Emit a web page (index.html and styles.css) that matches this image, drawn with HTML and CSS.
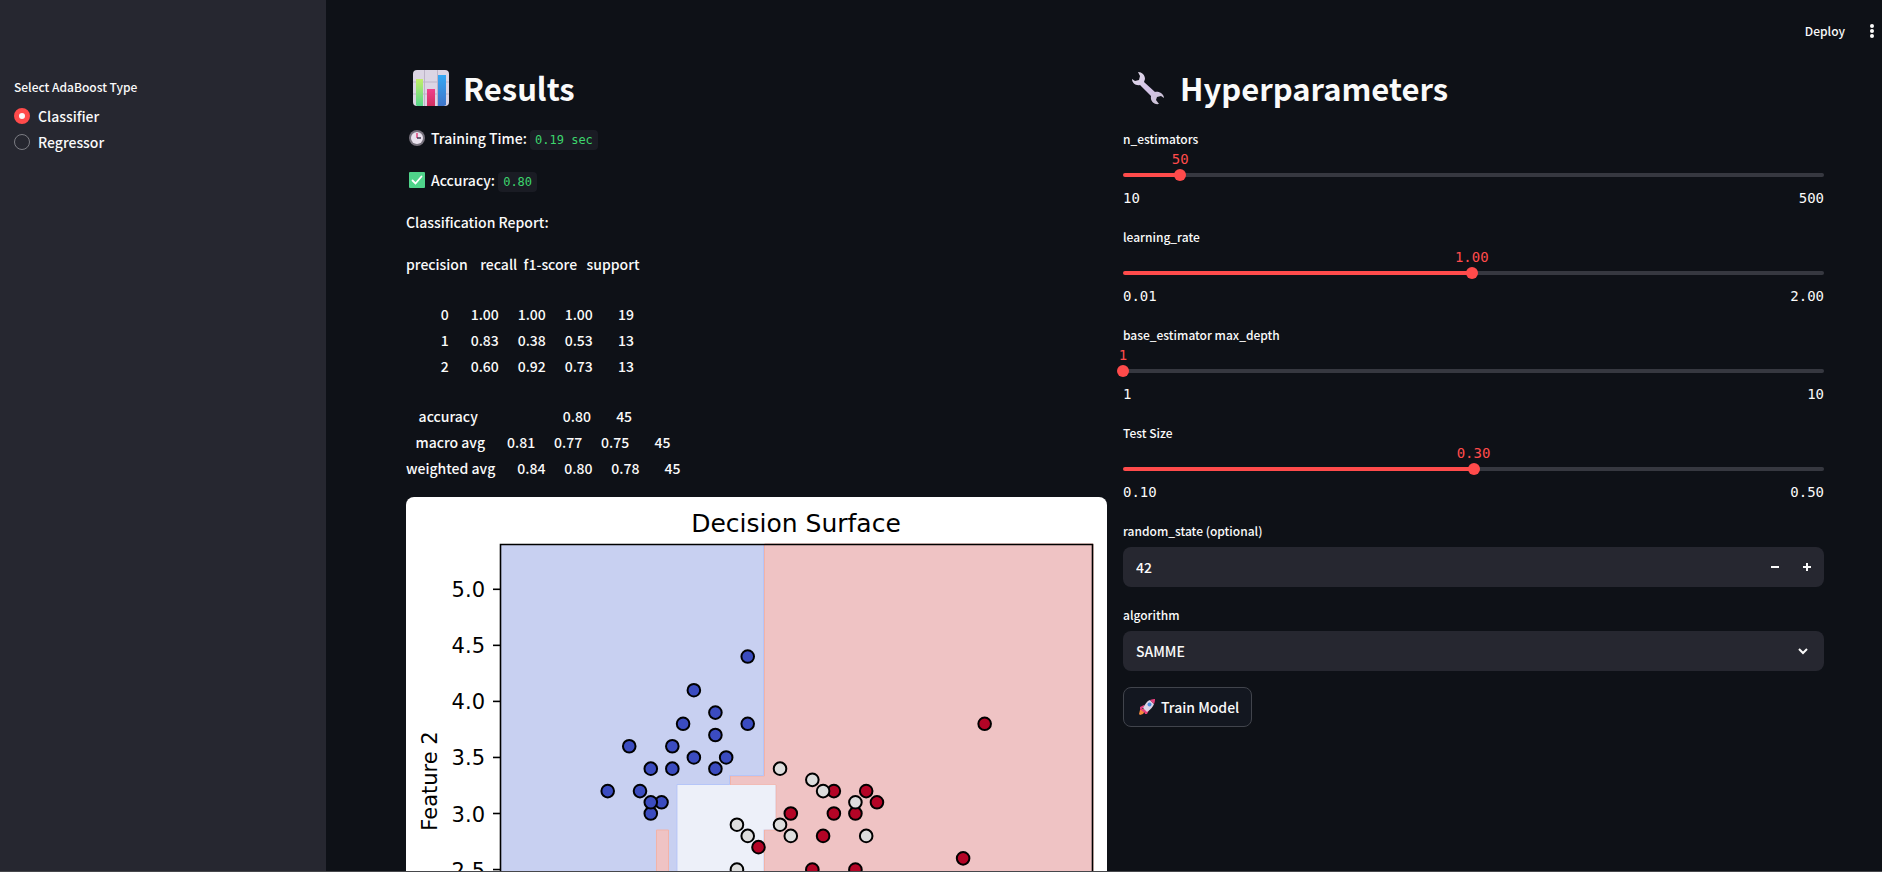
FILE: index.html
```html
<!DOCTYPE html>
<html lang="en">
<head>
<meta charset="utf-8">
<title>AdaBoost Playground</title>
<link rel="stylesheet" href="styles.css">
</head>
<body>
<div class="app">
  <aside class="sidebar">
    <fieldset class="radio-group">
      <legend class="label">Select AdaBoost Type</legend>
      <label class="radio"><input type="radio" name="type" checked> Classifier</label>
      <label class="radio"><input type="radio" name="type"> Regressor</label>
    </fieldset>
  </aside>

  <div class="page">
    <header class="toolbar">
      <button class="deploy" type="button">Deploy</button>
      <button class="menu" type="button" aria-label="Main menu">
        <svg width="6" height="16" viewBox="0 0 6 16" fill="#fafafa"><circle cx="3" cy="3" r="2"/><circle cx="3" cy="8" r="2"/><circle cx="3" cy="13" r="2"/></svg>
      </button>
    </header>

    <main class="columns">
      <section class="results">
        <h1>
          <svg class="h-icon" viewBox="0 0 36 36" aria-hidden="true">
            <defs>
              <linearGradient id="g1" x2="0" y2="1"><stop stop-color="#c3ef6a"/><stop offset="1" stop-color="#56d68b"/></linearGradient>
              <linearGradient id="g2" x2="0" y2="1"><stop stop-color="#f0408c"/><stop offset="1" stop-color="#d0305f"/></linearGradient>
              <linearGradient id="g3" x2="0" y2="1"><stop stop-color="#35a8f4"/><stop offset="1" stop-color="#3f74c9"/></linearGradient>
            </defs>
            <rect width="36" height="36" rx="4" fill="#dcd5e4"/>
            <path d="M11.500 0v36M24.500 0v36M0 12h36M0 24h36" stroke="#bdb4c8"/>
            <path d="M3 9h7v27H4a4 4 0 0 1-1-1z" fill="url(#g1)"/>
            <rect x="14" y="19" width="8" height="17" fill="url(#g2)"/>
            <path d="M25 5h8v30l-2 1h-6z" fill="url(#g3)"/>
          </svg>
          Results
        </h1>
        <p>
          <svg class="t-icon" viewBox="0 0 16 16" aria-hidden="true"><circle cx="8" cy="8" r="8" fill="#77727d"/><circle cx="8" cy="8" r="6" fill="#e9e2ee"/><path d="M8 3v5" stroke="#e0457b" stroke-width="1.500"/><path d="M8 8h4" stroke="#453a52" stroke-width="1.500"/></svg>
          <span>Training Time: <code>0.19 sec</code></span>
        </p>
        <p>
          <svg class="t-icon" viewBox="0 0 16 16" aria-hidden="true"><rect width="16" height="16" rx="1" fill="#4fd38a"/><path d="M3.500 8.500l3 3 6-7" fill="none" stroke="#fff" stroke-width="1.800" stroke-linecap="round"/></svg>
          <span>Accuracy: <code>0.80</code></span>
        </p>
        <p>Classification Report:</p>
        <div class="report">
<pre>precision    recall  f1-score   support</pre>
<pre>           0       1.00      1.00      1.00        19
           1       0.83      0.38      0.53        13
           2       0.60      0.92      0.73        13</pre>
<pre>    accuracy                           0.80        45
   macro avg       0.81      0.77      0.75        45
weighted avg       0.84      0.80      0.78        45</pre>
        </div>
        <svg class="chart" viewBox="0 0 701 560" role="img" aria-label="Decision Surface">
          <rect width="701" height="560" fill="#fff"/>
          <path d="M94 47H687V500H94z" fill="#c8d0f1"/>
          <path d="M358.500 47H687V500H358.500V333H370V288H324.500V279H358.500z" fill="#efc3c4" stroke="#f2b3a8"/>
          <path d="M357.500 47V278.500H323.500V287.500H271V500" fill="none" stroke="#b5c5f8"/>
          <path d="M271.500 288H369.500V332.500H357.500V500H271.500z" fill="#edf0f9"/>
          <path d="M250.500 500V333H262.500V500" fill="#efc3c4" stroke="#f2b3a8"/>
          <path d="M94.500 47.500H686.500V500H94.500z" fill="none" stroke="#000" stroke-width="1.600"/>
          <g id="ticks" stroke="#000" stroke-width="1.600"></g>
          <g id="tick-text" class="tick-text"></g>
          <g id="points" stroke="#000" stroke-width="2"></g>
          <text class="chart-title" x="390" y="35">Decision Surface</text>
          <text class="axis-title" transform="translate(31 284) rotate(-90)">Feature 2</text>
        </svg>
      </section>

      <section class="params">
        <h1>
          <svg class="h-icon" viewBox="0 0 36 36" aria-hidden="true">
            <defs><linearGradient id="w" x2="1" y2="1"><stop stop-color="#e2dce8"/><stop offset=".5" stop-color="#d3c3e8"/><stop offset="1" stop-color="#c9c1d0"/></linearGradient></defs>
            <path fill="url(#w)" d="M8 2C12 2 15 5 15 9L14 12L25 22C29 21 34 24 34 28L31 26L27 27L26 30L29 34C24 35 20 31 21 26L10 15C6 16 2 13 2 9L5 11L9 10L10 6z"/>
          </svg>
          Hyperparameters
        </h1>

        <div class="field slider">
          <label class="label" for="n">n_estimators</label>
          <div class="track" style="--pct:8.16%"><output for="n">50</output><input id="n" type="range" min="10" max="500" value="50"></div>
          <div class="ends"><span>10</span><span>500</span></div>
        </div>
        <div class="field slider">
          <label class="label" for="lr">learning_rate</label>
          <div class="track" style="--pct:49.75%"><output for="lr">1.00</output><input id="lr" type="range" min="0.01" max="2" step="0.01" value="1"></div>
          <div class="ends"><span>0.01</span><span>2.00</span></div>
        </div>
        <div class="field slider">
          <label class="label" for="depth">base_estimator max_depth</label>
          <div class="track" style="--pct:0%"><output for="depth">1</output><input id="depth" type="range" min="1" max="10" value="1"></div>
          <div class="ends"><span>1</span><span>10</span></div>
        </div>
        <div class="field slider">
          <label class="label" for="size">Test Size</label>
          <div class="track" style="--pct:50%"><output for="size">0.30</output><input id="size" type="range" min="0.1" max="0.5" step="0.01" value="0.3"></div>
          <div class="ends"><span>0.10</span><span>0.50</span></div>
        </div>

        <div class="field">
          <label class="label" for="seed">random_state (optional)</label>
          <div class="box">
            <input id="seed" type="text" inputmode="numeric" value="42">
            <button class="step" type="button" aria-label="Decrease"><svg width="8" height="8" viewBox="0 0 8 8"><path d="M0 4h8" stroke="#fafafa" stroke-width="2"/></svg></button>
            <button class="step" type="button" aria-label="Increase"><svg width="8" height="8" viewBox="0 0 8 8"><path d="M0 4h8M4 0v8" stroke="#fafafa" stroke-width="2"/></svg></button>
          </div>
        </div>
        <div class="field">
          <label class="label" for="algo">algorithm</label>
          <div class="box">
            <select id="algo"><option>SAMME</option><option>SAMME.R</option></select>
            <svg class="chevron" width="10" height="7" viewBox="0 0 10 7" aria-hidden="true"><path d="M1 1l4 4 4-4" fill="none" stroke="#fafafa" stroke-width="2"/></svg>
          </div>
        </div>
        <button class="train" type="button">
          <svg class="t-icon" viewBox="0 0 16 16" aria-hidden="true">
            <path d="M1 11l3-1 2 2-2 3-3 1-1-1z" fill="#f58a3c"/>
            <path d="M5 6L1 8v3l4-1zM10 11l-2 4H6l-1-4zM5 8l3 3-2 3-4-3z" fill="#e6407e"/>
            <path d="M11 1l4 4c-1 3-3 5-7 8L4 9c2-4 4-7 7-8z" fill="#ddd3e6"/>
            <path d="M11 1c2-1 4-1 5-1 0 1 0 3-1 5z" fill="#e6407e"/>
            <circle cx="10.500" cy="5.500" r="2" fill="#4f8fe0"/>
          </svg>
          <span>Train Model</span>
        </button>
      </section>
    </main>
  </div>
</div>
<script src="chart.js"></script>
</body>
</html>
```
FILE: styles.css
```css
* { box-sizing: border-box; }

body {
  margin: 0;
  background: #0e1117;
  color: #fafafa;
  font: 500 14px/26px "Noto Sans CJK SC", "Noto Sans", sans-serif;
}

button, input, select { font: inherit; color: inherit; }
button { cursor: pointer; }

.app {
  display: flex;
  height: 100vh;
  overflow: hidden;
  border-bottom: 1px solid #46474b;
}

.sidebar {
  flex: 0 0 326px;
  padding: 75px 14px 0;
  background: #262730;
}

.page { flex: 1; min-width: 0; }

.toolbar {
  display: flex;
  justify-content: flex-end;
  align-items: center;
  gap: 24px;
  height: 62px;
  padding-right: 7px;
}

.toolbar button {
  padding: 0;
  border: 0;
  background: none;
  line-height: 24px;
}

.toolbar .deploy { font-size: 12px; }
.menu { display: flex; }

.label {
  display: block;
  padding: 0;
  font-size: 12px;
  line-height: 24px;
}

.radio-group { margin: 0; padding: 0; border: 0; }
.radio-group .label { margin-bottom: 4px; }

.radio { display: flex; align-items: center; gap: 8px; }

.radio input {
  appearance: none;
  width: 16px;
  height: 16px;
  margin: 0;
  border: 1px solid #7b7c83;
  border-radius: 50%;
}

.radio input:checked { border: 5px solid #ff4b4b; background: #fafafa; }

.columns {
  display: grid;
  grid-template-columns: 1fr 1fr;
  gap: 16px;
  padding: 4px 58px 0 80px;
}

h1 {
  display: flex;
  align-items: center;
  gap: 14px;
  margin: 0 0 16px;
  padding-left: 7px;
  font-size: 31px;
  font-weight: 700;
  line-height: 43px;
}

.h-icon { width: 36px; height: 36px; }

p { display: flex; align-items: center; gap: 6px; margin: 0 0 16px; }
.t-icon { width: 16px; height: 16px; margin-left: 3px; }

code {
  padding: 3px 5px;
  border-radius: 4px;
  background: #1a1c24;
  color: #3dd56d;
  font: 12px "DejaVu Sans Mono", monospace;
}

.report { display: grid; gap: 24px; margin-bottom: 16px; }
pre { margin: 0; font: inherit; }

.chart { display: block; width: 100%; border-radius: 8px; }
.chart text { font-family: "DejaVu Sans", sans-serif; font-weight: 400; fill: #000; }
.chart-title { font-size: 25px; text-anchor: middle; }
.axis-title { font-size: 21px; text-anchor: middle; }
.tick-text { font-size: 21px; text-anchor: end; }

.params { display: flex; flex-direction: column; align-items: stretch; }
.params h1 { margin-bottom: 18px; }
.field { margin-bottom: 16px; }
.slider { margin-bottom: 19px; }

.track { position: relative; height: 39px; padding-top: 18px; }

.track::before {
  content: "";
  position: absolute;
  top: 22px;
  left: 0;
  right: 0;
  height: 4px;
  border-radius: 4px;
  background: linear-gradient(to right, #ff4b4b var(--pct), #363840 var(--pct));
}

.track output {
  position: absolute;
  top: 0;
  left: var(--pct);
  transform: translateX(-50%);
  color: #ff4b4b;
  font: 14px/16px "DejaVu Sans Mono", monospace;
}

.track input {
  position: relative;
  display: block;
  appearance: none;
  width: calc(100% + 12px);
  height: 12px;
  margin: 0 -6px;
  background: none;
}

.track input::-webkit-slider-thumb {
  appearance: none;
  width: 12px;
  height: 12px;
  border-radius: 50%;
  background: #ff4b4b;
}

.ends {
  display: flex;
  justify-content: space-between;
  font: 14px/16px "DejaVu Sans Mono", monospace;
}

.box {
  display: flex;
  align-items: center;
  height: 40px;
  margin-top: 4px;
  padding: 0 1px 0 13px;
  border-radius: 8px;
  background: #262730;
}

.box input, .box select {
  flex: 1;
  min-width: 0;
  height: 40px;
  padding: 0;
  border: 0;
  background: none;
  appearance: none;
}

.box option { background: #262730; }

.step {
  display: grid;
  place-items: center;
  width: 32px;
  height: 40px;
  padding: 0;
  border: 0;
  background: none;
}

.chevron { margin-right: 15px; }

.train {
  display: flex;
  align-items: center;
  align-self: flex-start;
  gap: 6px;
  height: 40px;
  padding: 0 12px;
  border: 1px solid #41444c;
  border-radius: 8px;
  background: #131720;
}
```
FILE: chart.js
```js
const NS = "http://www.w3.org/2000/svg";
const yOf = v => 92.3 + (5 - v) * 112.1;
const xOf = i => 201.7 + i * 10.77;

function add(parent, tag, attrs, text) {
  const el = document.createElementNS(NS, tag);
  for (const k in attrs) el.setAttribute(k, attrs[k]);
  if (text) el.textContent = text;
  document.getElementById(parent).appendChild(el);
}

for (let v = 5; v >= 2.5; v -= 0.5) {
  add("ticks", "path", { d: `M87 ${yOf(v)}H94` });
  add("tick-text", "text", { x: 79, y: yOf(v) + 8 }, v.toFixed(1));
}

// [column, value] pairs; each column is one 0.1 step of the first feature
const classes = [
  ["#b40426", [[21,3.2],[24,3.2],[25,3.1],[17,3],[21,3],[23,3],[20,2.8],[35,3.8],[33,2.6],[19,2.5],[23,2.5],[14,2.7]]],
  ["#3b4cc0", [[0,3.2],[2,3.6],[3,3.2],[4,3.4],[5,3.1],[4,3],[4,3.1],[6,3.6],[6,3.4],[7,3.8],[8,4.1],[8,3.5],[10,3.9],[10,3.7],[11,3.5],[10,3.4],[13,4.4],[13,3.8]]],
  ["#dddddd", [[12,2.9],[13,2.8],[12,2.5],[16,3.4],[19,3.3],[20,3.2],[23,3.1],[16,2.9],[17,2.8],[24,2.8]]]
];
for (const [fill, pts] of classes)
  for (const [i, v] of pts)
    add("points", "circle", { cx: xOf(i), cy: yOf(v), r: 6.3, fill });
```
